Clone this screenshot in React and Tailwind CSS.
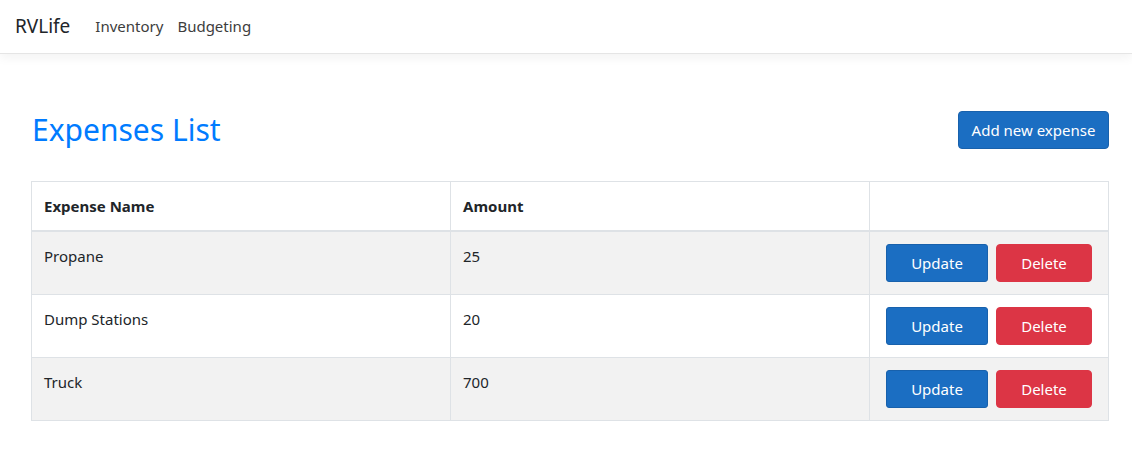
import React from 'react'

const expenses = [
  { name: 'Propane', amount: 25 },
  { name: 'Dump Stations', amount: 20 },
  { name: 'Truck', amount: 700 },
]

const font = { fontFamily: '"Noto Sans", "Open Sans", Arial, sans-serif' }

export default function App() {
  return (
    <div className="min-h-screen bg-white text-[#212529]" style={font}>
      <nav className="h-[54px] flex items-center px-[15px] border-b border-[#e5e5e5] shadow-[0_4px_10px_rgba(0,0,0,0.05)]">
        <span className="text-[19px] text-[#212529] mr-[25px]">RVLife</span>
        <a className="text-[15px] text-[#3d3d3d] mr-[14px]">Inventory</a>
        <a className="text-[15px] text-[#3d3d3d]">Budgeting</a>
      </nav>

      <main className="pl-[31px] pr-[23px]">
        <div className="flex items-center justify-between mt-[56px] mb-[31px]">
          <h1 className="text-[30px] leading-[40px] text-[#007bff] ml-px">Expenses List</h1>
          <button className="h-[38px] w-[151px] rounded-[4px] bg-[#1b6ec2] border border-[#1861ac] text-white text-[15px]">
            Add new expense
          </button>
        </div>

        <table className="w-[1077px] border-collapse border border-[#dee2e6] text-[15px] table-fixed">
          <colgroup>
            <col className="w-[419px]" />
            <col className="w-[419px]" />
            <col className="w-[239px]" />
          </colgroup>
          <thead>
            <tr>
              <th className="text-left font-bold px-[12px] py-[12px] leading-[24px] border border-[#dee2e6] border-b-2">Expense Name</th>
              <th className="text-left font-bold px-[12px] py-[12px] leading-[24px] border border-[#dee2e6] border-b-2">Amount</th>
              <th className="border border-[#dee2e6] border-b-2"></th>
            </tr>
          </thead>
          <tbody>
            {expenses.map((e, i) => (
              <tr key={e.name} className={i % 2 === 0 ? 'bg-[#f2f2f2]' : 'bg-white'}>
                <td className="align-top px-[12px] py-[12px] leading-[24px] border border-[#dee2e6]">{e.name}</td>
                <td className="align-top px-[12px] py-[12px] leading-[24px] border border-[#dee2e6]">{e.amount}</td>
                <td className="align-top pl-[16px] py-[12px] border border-[#dee2e6]">
                  <div className="flex gap-[8px]">
                    <button className="h-[38px] w-[102px] rounded-[3px] bg-[#1b6ec2] border border-[#1861ac] text-white text-[15px]">
                      Update
                    </button>
                    <button className="h-[38px] w-[96px] rounded-[4px] bg-[#dc3545] border border-[#dc3545] text-white text-[15px]">
                      Delete
                    </button>
                  </div>
                </td>
              </tr>
            ))}
          </tbody>
        </table>
      </main>
    </div>
  )
}
